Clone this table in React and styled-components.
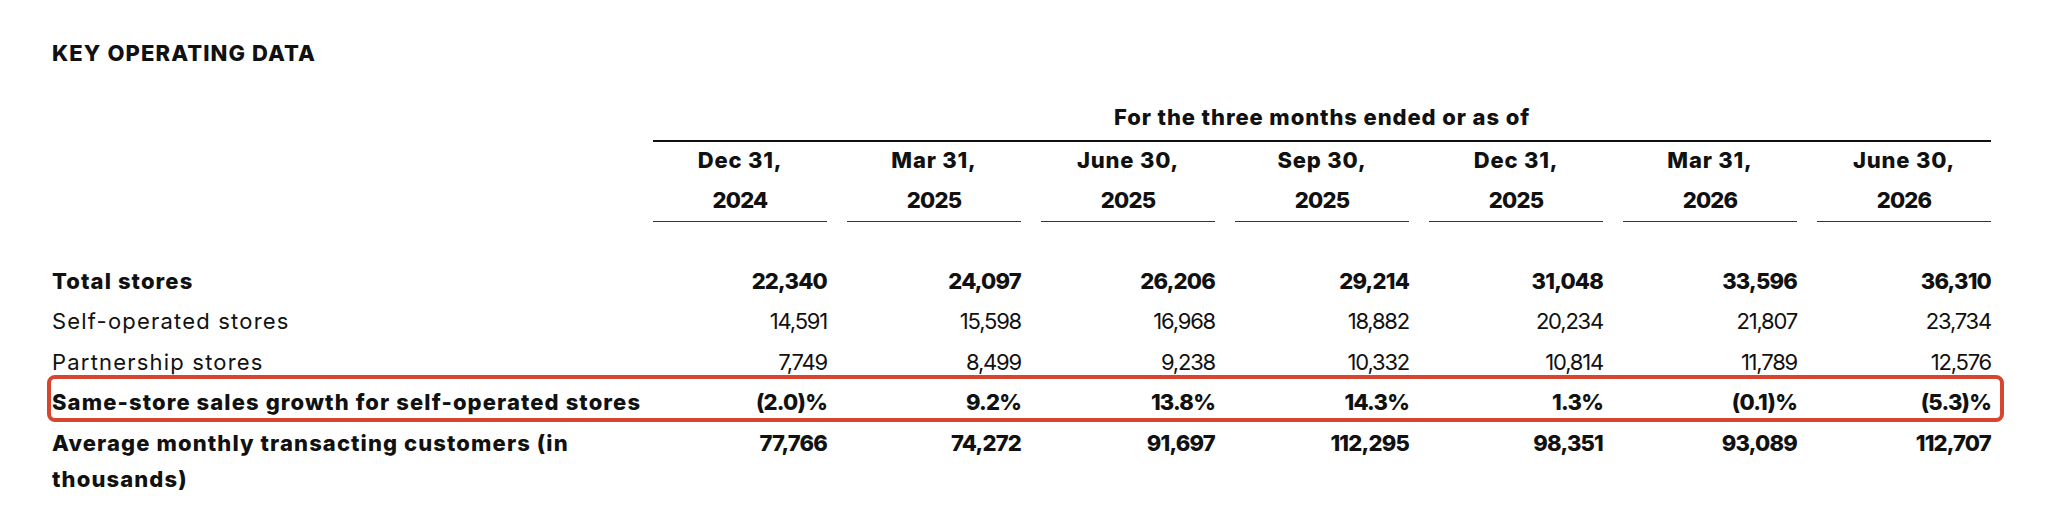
import React from "react";
import styled, { createGlobalStyle, css } from "styled-components";

const GlobalStyle = createGlobalStyle`
  html, body {
    margin: 0;
    padding: 0;
    background: #ffffff;
  }
  body {
    font-family: Inter, "Open Sans", sans-serif;
    color: #111111;
  }
`;

const periods = [
  ["Dec 31,", "2024"],
  ["Mar 31,", "2025"],
  ["June 30,", "2025"],
  ["Sep 30,", "2025"],
  ["Dec 31,", "2025"],
  ["Mar 31,", "2026"],
  ["June 30,", "2026"],
];

const rows = [
  {
    label: ["Total stores"],
    bold: true,
    values: ["22,340", "24,097", "26,206", "29,214", "31,048", "33,596", "36,310"],
  },
  {
    label: ["Self-operated stores"],
    values: ["14,591", "15,598", "16,968", "18,882", "20,234", "21,807", "23,734"],
  },
  {
    label: ["Partnership stores"],
    values: ["7,749", "8,499", "9,238", "10,332", "10,814", "11,789", "12,576"],
  },
  {
    label: ["Same-store sales growth for self-operated stores"],
    bold: true,
    highlight: true,
    values: ["(2.0)%", "9.2%", "13.8%", "14.3%", "1.3%", "(0.1)%", "(5.3)%"],
  },
  {
    label: ["Average monthly transacting customers (in", "thousands)"],
    bold: true,
    values: ["77,766", "74,272", "91,697", "112,295", "98,351", "93,089", "112,707"],
  },
];

// label column, then seven period columns with a gap between underlines
const Grid = css`
  display: grid;
  grid-template-columns: 581px repeat(7, 174px);
  column-gap: 20px;
`;

const Page = styled.div`
  padding: 38px 0 0 52px;
  font-size: 22px;
`;

const Title = styled.h2`
  margin: 0;
  font-size: 22px;
  line-height: 30px;
  font-weight: 800;
  letter-spacing: 1.1px;
`;

const Table = styled.div`
  width: 1939px;
`;

const Caption = styled.div`
  margin: 34px 0 0 601px;
  padding-bottom: 8px;
  border-bottom: 2px solid #111111;
  line-height: 30px;
  font-weight: 800;
  text-align: center;
  letter-spacing: 0.9px;
`;

const HeadRow = styled.div`
  ${Grid};
  margin-bottom: 38.5px;
`;

const Period = styled.div`
  margin-top: -2px;
  padding-bottom: 1px;
  border-bottom: 1.5px solid #333333;
  line-height: 40px;
  font-weight: 800;
  text-align: center;
`;

const PeriodLine = styled.span`
  display: block;
  letter-spacing: ${(p) => (p.$year ? "-0.8px" : "0.8px")};
`;

const Row = styled.div`
  ${Grid};
  position: relative;
  line-height: 36px;
  padding: 2px 0 2.5px;
  font-weight: ${(p) => (p.$bold ? 800 : 400)};

  ${(p) =>
    p.$highlight &&
    css`
      &::before {
        content: "";
        position: absolute;
        top: -7.5px;
        bottom: 1px;
        left: -5px;
        right: -13px;
        border: 4px solid #d8452f;
        border-radius: 8px;
        pointer-events: none;
      }
    `}
`;

const Label = styled.div`
  white-space: nowrap;
  letter-spacing: ${(p) => (p.$bold ? "1.1px" : "1.2px")};
`;

const Value = styled.div`
  text-align: right;
  letter-spacing: ${(p) => (p.$bold ? "-0.8px" : "-1.2px")};
`;

export default function App() {
  return (
    <Page>
      <GlobalStyle />
      <Title>KEY OPERATING DATA</Title>
      <Table>
        <Caption>For the three months ended or as of</Caption>
        <HeadRow>
          <div />
          {periods.map(([date, year], i) => (
            <Period key={i}>
              <PeriodLine>{date}</PeriodLine>
              <PeriodLine $year>{year}</PeriodLine>
            </Period>
          ))}
        </HeadRow>
        {rows.map((row) => (
          <Row key={row.label[0]} $bold={row.bold} $highlight={row.highlight}>
            <Label $bold={row.bold}>
              {row.label.map((line, i) => (
                <React.Fragment key={i}>
                  {i > 0 && <br />}
                  {line}
                </React.Fragment>
              ))}
            </Label>
            {row.values.map((v, i) => (
              <Value key={i} $bold={row.bold}>
                {v}
              </Value>
            ))}
          </Row>
        ))}
      </Table>
    </Page>
  );
}
